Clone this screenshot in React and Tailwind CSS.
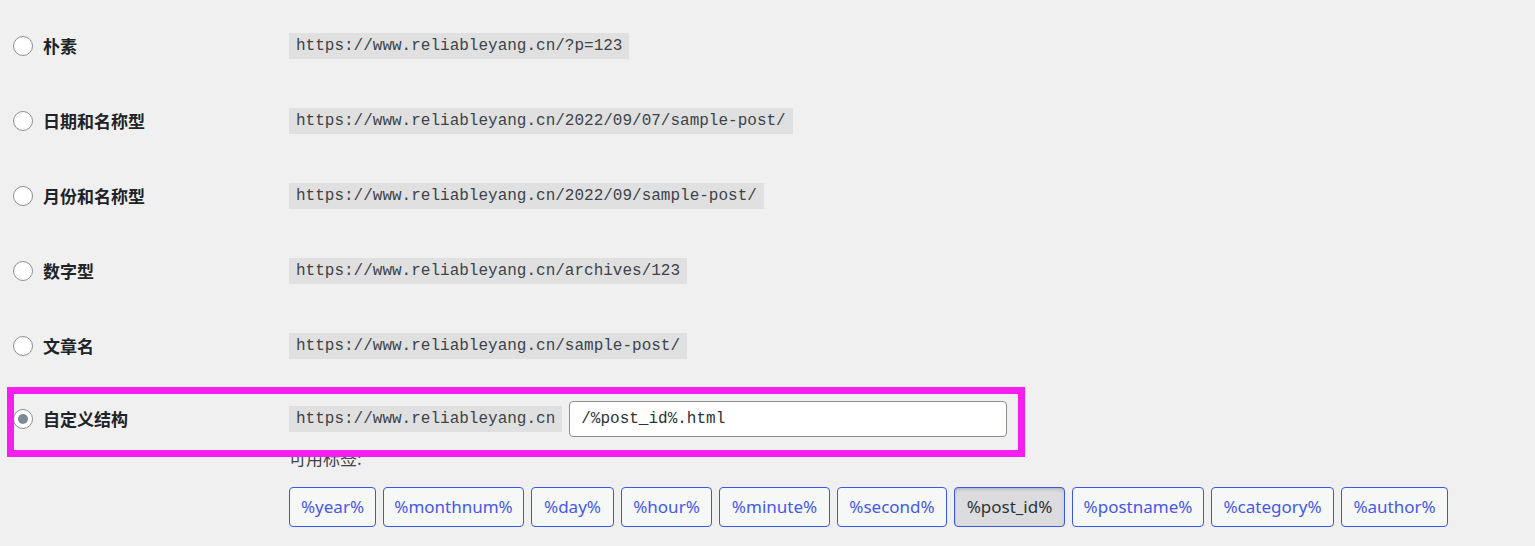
import React from 'react';

const options = [
  { id: 'plain', label: '朴素', url: 'https://www.reliableyang.cn/?p=123' },
  { id: 'day', label: '日期和名称型', url: 'https://www.reliableyang.cn/2022/09/07/sample-post/' },
  { id: 'month', label: '月份和名称型', url: 'https://www.reliableyang.cn/2022/09/sample-post/' },
  { id: 'numeric', label: '数字型', url: 'https://www.reliableyang.cn/archives/123' },
  { id: 'postname', label: '文章名', url: 'https://www.reliableyang.cn/sample-post/' },
];

const tags = [
  { name: '%year%', w: 'w-[87px]' },
  { name: '%monthnum%', w: 'w-[141px]' },
  { name: '%day%', w: 'w-[83px]' },
  { name: '%hour%', w: 'w-[91px]' },
  { name: '%minute%', w: 'w-[111px]' },
  { name: '%second%', w: 'w-[110px]' },
  { name: '%post_id%', w: 'w-[111px]', active: true },
  { name: '%postname%', w: 'w-[132px]' },
  { name: '%category%', w: 'w-[123px]' },
  { name: '%author%', w: 'w-[107px]' },
];

const mono = "font-['Liberation_Mono','DejaVu_Sans_Mono',monospace]";
const cjk = "font-['Noto_Sans_CJK_SC','Noto_Sans',sans-serif]";

const Radio = ({ checked }) => (
  <span className="w-[20px] h-[20px] rounded-full border border-[#8c8f94] bg-white flex items-center justify-center shrink-0">
    {checked && <span className="w-[10px] h-[10px] rounded-full bg-[#7e8993]" />}
  </span>
);

const Label = ({ text, checked }) => (
  <div className="w-[289px] shrink-0 pl-[13px] flex items-center gap-[10px]">
    <Radio checked={checked} />
    <span className={`${cjk} text-[17px] font-bold text-[#1d2327]`}>{text}</span>
  </div>
);

const Code = ({ children }) => (
  <code className={`${mono} text-[16px] leading-[26px] h-[26px] px-[7px] bg-[#e0e0e0] text-[#3c434a]`}>
    {children}
  </code>
);

export default function App() {
  return (
    <div className="relative w-[1535px] h-[546px] bg-[#f0f0f1] overflow-hidden pt-[8px]">
      {options.map((o) => (
        <div key={o.id} className="h-[75px] flex items-center">
          <Label text={o.label} />
          <Code>{o.url}</Code>
        </div>
      ))}

      <div className="flex pt-[18px]">
        <div className="h-[36px] flex items-center">
          <Label text="自定义结构" checked />
        </div>
        <div className="flex flex-col">
          <div className="flex items-center gap-[7px] h-[36px]">
            <Code>https://www.reliableyang.cn</Code>
            <div className={`${mono} w-[438px] h-[36px] border border-[#8c8f94] rounded-[4px] bg-white px-[11px] flex items-center text-[16px] text-[#2c3338]`}>
              /%post_id%.html
            </div>
          </div>
          <div className={`${cjk} mt-[9px] text-[17px] leading-[24px] text-[#3c434a]`}>可用标签:</div>
          <div className="mt-[17px] flex gap-[7px]">
            {tags.map((t) => (
              <button
                key={t.name}
                className={`${t.w} h-[40px] rounded-[4px] border border-[#3858e9] font-['Noto_Sans',sans-serif] text-[17px] ${
                  t.active
                    ? 'bg-[#dcdcde] text-[#2c3338] shadow-[inset_0_2px_5px_-3px_rgba(0,0,0,0.5)]'
                    : 'bg-[#f6f7f7] text-[#4659e8]'
                }`}
              >
                {t.name}
              </button>
            ))}
          </div>
        </div>
      </div>

      <div className="absolute left-[7px] top-[387px] w-[1018px] h-[70px] border-[7px] border-[#f520f0]" />
    </div>
  );
}
